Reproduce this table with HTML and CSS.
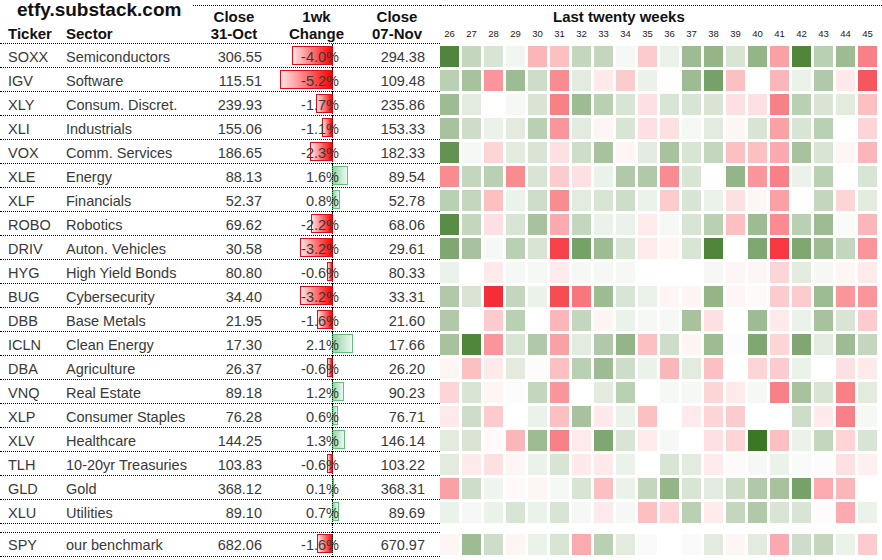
FILE: index.html
```html
<!DOCTYPE html>
<html lang="en">
<head>
<meta charset="utf-8">
<title>etfy.substack.com – weekly sector ETFs</title>
<link rel="stylesheet" href="styles.css">
</head>
<body>
<div class="sheet">
  <div class="header">
    <div class="header-left">
      <div class="brand-col">
        <div class="brand">etfy.substack.com</div>
        <div class="lab-row"><span class="lab-ticker">Ticker</span><span class="lab-sector">Sector</span></div>
      </div>
      <div class="col-heads">
        <div class="ch ch-close1">Close<br>31-Oct</div>
        <div class="ch ch-change">1wk<br>Change</div>
        <div class="ch ch-close2">Close<br>07-Nov</div>
      </div>
    </div>
    <div class="header-right">
      <div class="heat-title">Last twenty weeks</div>
      <div class="weeks"><span>26</span><span>27</span><span>28</span><span>29</span><span>30</span><span>31</span><span>32</span><span>33</span><span>34</span><span>35</span><span>36</span><span>37</span><span>38</span><span>39</span><span>40</span><span>41</span><span>42</span><span>43</span><span>44</span><span>45</span></div>
    </div>
  </div>

  <div class="row"><div class="cells"><span class="tk">SOXX</span><span class="sec">Semiconductors</span><span class="num">306.55</span><span class="chg"><i class="bar neg" style="--w:4.0"></i><span class="pct">-4.0%</span></span><span class="num">294.38</span></div><div class="heat" data-v="9 3 2 0.7 -3.5 -3 3 3 0.5 -2.5 1 5 5.5 2 5.5 -4.5 9 3.5 5 -6"></div></div>
  <div class="row"><div class="cells"><span class="tk">IGV</span><span class="sec">Software</span><span class="num">115.51</span><span class="chg"><i class="bar neg" style="--w:5.2"></i><span class="pct">-5.2%</span></span><span class="num">109.48</span></div><div class="heat" data-v="3.5 4.5 -5 5 2.5 -5.5 1.5 -1 -2.5 1 0 5 7 -3 0 -3.5 1 4 -1 -8"></div></div>
  <div class="row"><div class="cells"><span class="tk">XLY</span><span class="sec">Consum. Discret.</span><span class="num">239.93</span><span class="chg"><i class="bar neg" style="--w:1.7"></i><span class="pct">-1.7%</span></span><span class="num">235.86</span></div><div class="heat" data-v="5 1.5 0 0.5 2 -6 5 3.5 2 -1.5 2 2 2 -1.5 -1.5 -6 3.5 2 1.5 -3"></div></div>
  <div class="row"><div class="cells"><span class="tk">XLI</span><span class="sec">Industrials</span><span class="num">155.06</span><span class="chg"><i class="bar neg" style="--w:1.1"></i><span class="pct">-1.1%</span></span><span class="num">153.33</span></div><div class="heat" data-v="4.5 2.5 1 1.5 3.5 -5 1.5 -0.5 2 -1.5 -1.5 0.5 1.5 -0.5 2 -4.5 2 3.5 0 -2"></div></div>
  <div class="row"><div class="cells"><span class="tk">VOX</span><span class="sec">Comm. Services</span><span class="num">186.65</span><span class="chg"><i class="bar neg" style="--w:2.3"></i><span class="pct">-2.3%</span></span><span class="num">182.33</span></div><div class="heat" data-v="8 0.5 -2 1.5 2 -1.5 2.5 4.5 -0.5 1.5 4.5 2 3 -3 -3 -4 4.5 2 -0.5 -3.5"></div></div>
  <div class="row"><div class="cells"><span class="tk">XLE</span><span class="sec">Energy</span><span class="num">88.13</span><span class="chg"><i class="bar pos" style="--w:1.6"></i><span class="pct">1.6%</span></span><span class="num">89.54</span></div><div class="heat" data-v="-5.5 3 3.5 -5.5 2 -2.5 -1.5 1 4 4 -5.5 2 0 5.5 -5 -6 1 3.5 0 2"></div></div>
  <div class="row"><div class="cells"><span class="tk">XLF</span><span class="sec">Financials</span><span class="num">52.37</span><span class="chg"><i class="bar pos" style="--w:0.8"></i><span class="pct">0.8%</span></span><span class="num">52.78</span></div><div class="heat" data-v="3.5 3 -3 1 2.5 -5.5 1.5 2 2.5 1 -2.5 2 1 -1.5 -0.5 -4.5 0 3 -2 1.5"></div></div>
  <div class="row"><div class="cells"><span class="tk">ROBO</span><span class="sec">Robotics</span><span class="num">69.62</span><span class="chg"><i class="bar neg" style="--w:2.2"></i><span class="pct">-2.2%</span></span><span class="num">68.06</span></div><div class="heat" data-v="8.5 3 -1.5 2 4.5 -4 3 1 1 -1 0.5 2 3.5 -3 5 -5.5 3.5 5 0.3 -3.5"></div></div>
  <div class="row"><div class="cells"><span class="tk">DRIV</span><span class="sec">Auton. Vehicles</span><span class="num">30.58</span><span class="chg"><i class="bar neg" style="--w:3.2"></i><span class="pct">-3.2%</span></span><span class="num">29.61</span></div><div class="heat" data-v="6.5 4.5 0.5 3.5 2 -9 7 5 2 -1 -0.5 2 9 0 6.5 -9.5 6.5 5 3 -5"></div></div>
  <div class="row"><div class="cells"><span class="tk">HYG</span><span class="sec">High Yield Bonds</span><span class="num">80.80</span><span class="chg"><i class="bar neg" style="--w:0.6"></i><span class="pct">-0.6%</span></span><span class="num">80.33</span></div><div class="heat" data-v="1 0 -1 0.5 0.5 -1 0.5 0.5 0.5 0 0 0 0.5 -0.5 -0.5 -2 1.5 0.5 -0.5 -1"></div></div>
  <div class="row"><div class="cells"><span class="tk">BUG</span><span class="sec">Cybersecurity</span><span class="num">34.40</span><span class="chg"><i class="bar neg" style="--w:3.2"></i><span class="pct">-3.2%</span></span><span class="num">33.31</span></div><div class="heat" data-v="4 2 -10 3 1 -8.5 -6.5 5 2 1 -0.5 -0.5 5.5 -0.5 -0.3 -2.5 -2.5 5 -5 -5"></div></div>
  <div class="row"><div class="cells"><span class="tk">DBB</span><span class="sec">Base Metals</span><span class="num">21.95</span><span class="chg"><i class="bar neg" style="--w:1.6"></i><span class="pct">-1.6%</span></span><span class="num">21.60</span></div><div class="heat" data-v="4 0 -2.5 3.5 0 -3.5 3 -0.5 1 0.5 0.5 4.5 -1.5 0 5 -1 1 4.5 2 -2.5"></div></div>
  <div class="row"><div class="cells"><span class="tk">ICLN</span><span class="sec">Clean Energy</span><span class="num">17.30</span><span class="chg"><i class="bar pos" style="--w:2.1"></i><span class="pct">2.1%</span></span><span class="num">17.66</span></div><div class="heat" data-v="4.5 9 -5 2 4 -4.5 1.5 4 5.5 -3 2.5 -0.5 5 0.2 6.5 -2 6.5 1.5 5 3"></div></div>
  <div class="row"><div class="cells"><span class="tk">DBA</span><span class="sec">Agriculture</span><span class="num">26.37</span><span class="chg"><i class="bar neg" style="--w:0.6"></i><span class="pct">-0.6%</span></span><span class="num">26.20</span></div><div class="heat" data-v="-0.5 -3 -1 1.5 0.2 -3 3.5 5 2.5 1 -3.5 1.5 -3 0 -2 -2.5 1 0 -1.5 -1"></div></div>
  <div class="row"><div class="cells"><span class="tk">VNQ</span><span class="sec">Real Estate</span><span class="num">89.18</span><span class="chg"><i class="bar pos" style="--w:1.2"></i><span class="pct">1.2%</span></span><span class="num">90.23</span></div><div class="heat" data-v="-2 2 -0.5 0.2 3 -5 0 1.5 3.5 0 0.5 0.5 -2 -1 0.5 -6 4.5 2 -6 1.5"></div></div>
  <div class="row"><div class="cells"><span class="tk">XLP</span><span class="sec">Consumer Staples</span><span class="num">76.28</span><span class="chg"><i class="bar pos" style="--w:0.6"></i><span class="pct">0.6%</span></span><span class="num">76.71</span></div><div class="heat" data-v="-1 2.5 -2.5 0 1 -3 4.5 -1 1 -3 0 -1 -2 -2.5 0 0 2.5 -1 -6 0.5"></div></div>
  <div class="row"><div class="cells"><span class="tk">XLV</span><span class="sec">Healthcare</span><span class="num">144.25</span><span class="chg"><i class="bar pos" style="--w:1.3"></i><span class="pct">1.3%</span></span><span class="num">146.14</span></div><div class="heat" data-v="1.5 2 -0.3 -3.5 5 -6 -1 6.5 2 -1 0.5 0 -1.5 -2 10 -3 1 3 -2 2"></div></div>
  <div class="row"><div class="cells"><span class="tk">TLH</span><span class="sec">10-20yr Treasuries</span><span class="num">103.83</span><span class="chg"><i class="bar neg" style="--w:0.6"></i><span class="pct">-0.6%</span></span><span class="num">103.22</span></div><div class="heat" data-v="1.5 -1 -1.5 -0.5 1 2 -1 -1 1 0 2 1.5 -1 -0.3 0.5 1 0.3 0.2 -1.5 -0.7"></div></div>
  <div class="row"><div class="cells"><span class="tk">GLD</span><span class="sec">Gold</span><span class="num">368.12</span><span class="chg"><i class="bar pos" style="--w:0.1"></i><span class="pct">0.1%</span></span><span class="num">368.31</span></div><div class="heat" data-v="-4.5 2.5 0.8 -0.3 -0.5 0.5 2 -3 1 3 5.5 2 1.5 2.5 4 4.5 7 -4 -3.5 0"></div></div>
  <div class="row"><div class="cells"><span class="tk">XLU</span><span class="sec">Utilities</span><span class="num">89.10</span><span class="chg"><i class="bar pos" style="--w:0.7"></i><span class="pct">0.7%</span></span><span class="num">89.69</span></div><div class="heat" data-v="1 0.5 1 2 1 2 0.5 -1 0.5 -3 -2 3.5 -1 3 4 2 2 -0.2 -4 1"></div></div>

  <div class="gap"></div>

  <div class="row bench"><div class="cells"><span class="tk">SPY</span><span class="sec">our benchmark</span><span class="num">682.06</span><span class="chg"><i class="bar neg" style="--w:1.6"></i><span class="pct">-1.6%</span></span><span class="num">670.97</span></div><div class="heat" data-v="-0.5 5 2.5 -0.5 1 2 -4 3.5 1.5 0.3 0 0.3 1.5 -0.5 1.5 -4 2.5 3 1 -2.5"></div></div>
</div>
<script src="script.js"></script>
</body>
</html>
```

FILE: styles.css
```css
html, body {
  margin: 0;
  padding: 0;
  background: #ffffff;
}

body {
  font-family: "Liberation Sans", Arial, sans-serif;
  color: #3a3a3a;
}

.sheet {
  width: 882px;
}

/* ---------- header ---------- */
.header {
  display: flex;
  height: 44px;
}

.header-left {
  width: 440px;
  height: 44px;
  box-sizing: border-box;
  border-bottom: 1px dotted #000;
  display: flex;
}

.brand-col {
  width: 193px;
}

.brand {
  padding-left: 17px;
  font-size: 19px;
  font-weight: bold;
  line-height: 20px;
  color: #111;
  white-space: nowrap;
}

.lab-row {
  display: flex;
  margin-top: 5px;
  font-size: 15px;
  font-weight: bold;
  line-height: 17px;
  color: #111;
}

.lab-ticker {
  width: 58px;
  padding-left: 8px;
}

.col-heads {
  flex: 1;
  margin-top: 5px;
  border-top: 1px dotted #000;
  display: flex;
}

.ch {
  padding-top: 2px;
  font-size: 15px;
  font-weight: bold;
  line-height: 17px;
  text-align: center;
  color: #111;
}

.ch-close1 { width: 82px; }
.ch-change { width: 83px; }
.ch-close2 { width: 78px; }

.header-right {
  width: 442px;
  margin-top: 5px;
  border-top: 1px dotted #000;
}

.heat-title {
  padding-left: 113px;
  padding-top: 2px;
  font-size: 15px;
  font-weight: bold;
  line-height: 17px;
  color: #111;
}

.weeks {
  display: flex;
  gap: 3px;
  margin-top: 3px;
  font-size: 9.5px;
  line-height: 12px;
  color: #222;
}

.weeks span {
  width: 19px;
  text-align: center;
}

/* ---------- rows ---------- */
.row {
  display: flex;
  height: 24px;
}

.cells {
  width: 440px;
  box-sizing: border-box;
  border-bottom: 1px dotted #000;
  padding-top: 4px;
  display: grid;
  grid-template-columns: 66px 134px 62px 78px 85px 15px;
  font-size: 14.5px;
  line-height: 19px;
  color: #3a3a3a;
  white-space: nowrap;
}

.tk {
  padding-left: 8px;
}

.num {
  text-align: right;
}

.chg {
  position: relative;
  text-align: right;
  padding-right: 1px;
}

.chg::after {
  content: "";
  position: absolute;
  left: 70px;
  top: -4px;
  bottom: -1px;
  border-left: 1px dotted #000;
  z-index: 2;
}

.pct {
  position: relative;
  z-index: 1;
}

.bar {
  position: absolute;
  top: -2px;
  height: 19px;
  box-sizing: border-box;
  width: calc(var(--w) * 10.2px);
  z-index: 0;
}

.bar.neg {
  right: 7px;
  background: linear-gradient(to right, #ffe4e6, #ff0000);
  border: 1px solid #d8101a;
}

.bar.pos {
  left: 70px;
  background: linear-gradient(to right, #94d3a5, #eef8f1);
  border: 1px solid #63be7b;
}

.gap {
  position: relative;
  width: 440px;
  height: 8px;
}

.gap::after {
  content: "";
  position: absolute;
  left: 332px;
  top: 0;
  bottom: 0;
  border-left: 1px dotted #000;
}

.bench {
  height: 25px;
}

.bench .cells {
  border-top: 1px dotted #000;
  padding-top: 3px;
}

.bench .chg::after {
  top: -4px;
}

/* ---------- heatmap ---------- */
.heat {
  display: flex;
  gap: 3px;
  padding-top: 2px;
  align-items: flex-start;
}

.hc {
  display: block;
  width: 19px;
  height: 21px;
  background: #ffffff;
}
```

FILE: script.js
```js
document.querySelectorAll('.heat').forEach(function (h) {
  h.dataset.v.trim().split(/\s+/).forEach(function (s) {
    var v = parseFloat(s);
    var t = Math.min(Math.abs(v) / 10, 1);
    var r, g, b;
    if (v < 0) {
      r = 255 - 11 * t; g = 255 - 210 * t; b = 255 - 200 * t;
    } else {
      r = 255 - 196 * t; g = 255 - 135 * t; b = 255 - 217 * t;
    }
    var c = document.createElement('i');
    c.className = 'hc';
    c.style.background = 'rgb(' + Math.round(r) + ',' + Math.round(g) + ',' + Math.round(b) + ')';
    h.appendChild(c);
  });
});
```
